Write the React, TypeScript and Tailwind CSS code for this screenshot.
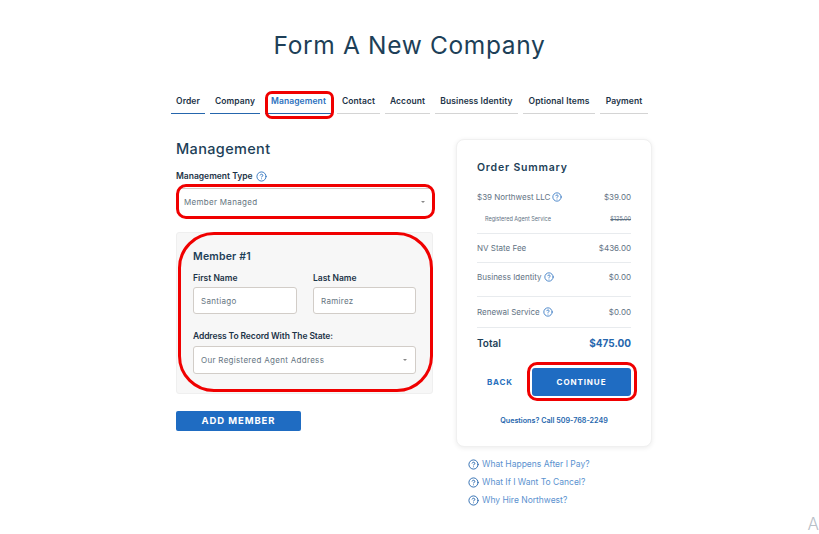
import { CircleHelp } from 'lucide-react'

const TABS = [
  { label: 'Order', width: 'w-[34px]', done: true },
  { label: 'Company', width: 'w-[50px]', done: true },
  { label: 'Management', width: 'w-[67px]', done: true, active: true },
  { label: 'Contact', width: 'w-[43px]' },
  { label: 'Account', width: 'w-[45px]' },
  { label: 'Business Identity', width: 'w-[83px]' },
  { label: 'Optional Items', width: 'w-[72px]' },
  { label: 'Payment', width: 'w-[48px]' },
]

const FONT = "font-['Inter',sans-serif]"

function Help({ className }: { className: string }) {
  return <CircleHelp className={`shrink-0 text-[#2f74c0] ${className}`} strokeWidth={2} />
}

function Arrow() {
  return <span className="h-0 w-0 border-x-[2px] border-t-[2px] border-x-transparent border-t-[#888]" />
}

function Highlight({ className }: { className: string }) {
  return <div className={`pointer-events-none absolute border-[3px] border-[#f00000] ${className}`} />
}

function Field({ label, value, width }: { label: string; value: string; width: string }) {
  return (
    <div className={width}>
      <div className="mb-[3px] h-[12px] text-[8.5px] leading-[12px] font-semibold text-[#1c3347]">{label}</div>
      <div className="flex h-[27px] items-center rounded-[3px] border border-[#d2cdc8] bg-white pl-[7px] text-[8px] tracking-[0.3px] text-[#66757f]">
        {value}
      </div>
    </div>
  )
}

function Row({ label, price, help, className }: { label: string; price: string; help?: boolean; className: string }) {
  return (
    <div className={`flex items-start justify-between border-b border-[#e8ebee] text-[8px] leading-[12px] text-[#5f7283] ${className}`}>
      <span className="flex h-[12px] items-center gap-[3px]">
        {label}
        {help && <Help className="size-[10px]" />}
      </span>
      <span>{price}</span>
    </div>
  )
}

export default function App() {
  return (
    <div className={`relative h-[534px] w-[819px] overflow-hidden bg-white ${FONT}`}>
      <h1 className="pt-[30px] text-center text-[24.5px] leading-[30px] font-normal tracking-[0.65px] text-[#1d3f58]">
        Form A New Company
      </h1>

      {/* Steps */}
      <div className="mt-[34px] ml-[171px] flex gap-[5px]">
        {TABS.map((tab) => (
          <div
            key={tab.label}
            className={`relative h-[20px] ${tab.width} border-b text-center text-[8.5px] leading-[14px] font-semibold tracking-[0.1px] whitespace-nowrap ${
              tab.done ? 'border-[#2566ad]' : 'border-[#d4d4d4]'
            } ${tab.active ? 'text-[#2a70bd]' : 'text-[#1c3347]'}`}
          >
            {tab.label}
            {tab.active && <Highlight className="-top-[3px] -right-[2px] -bottom-[6px] left-0 rounded-[7px]" />}
          </div>
        ))}
      </div>

      <div className="mt-[25px] ml-[176px] flex items-start gap-[23px]">
        {/* Form column */}
        <div className="w-[257px]">
          <h2 className="mt-[1px] text-[14.5px] leading-[18px] font-medium tracking-[0.35px] text-[#1d3f58]">Management</h2>
          <div className="mt-[12px] flex h-[12px] items-center gap-[3px] text-[8.5px] font-semibold text-[#1c3347]">
            Management Type
            <Help className="size-[11px]" />
          </div>
          <div className="relative mt-[6px] ml-[1px] flex h-[27px] items-center justify-between rounded-[3px] border-t border-[#d2cdc8] bg-white pr-[8px] pl-[7px] text-[8px] tracking-[0.3px] text-[#66757f]">
            Member Managed
            <Arrow />
            <Highlight className="-top-[5px] -right-[2px] -bottom-[4px] -left-[1px] rounded-[10px]" />
          </div>

          <div className="relative mt-[17px] h-[162px] rounded-[3px] border border-[#efefef] bg-[#f7f7f7] px-[16px] pt-[16px]">
            <h3 className="text-[10.5px] leading-[16px] font-semibold tracking-[0.2px] text-[#1d3f58]">Member #1</h3>
            <div className="mt-[7px] flex justify-between">
              <Field label="First Name" value="Santiago" width="w-[104px]" />
              <Field label="Last Name" value="Ramirez" width="w-[103px]" />
            </div>
            <div className="mt-[16px] h-[12px] text-[8.5px] leading-[12px] font-semibold tracking-[-0.1px] text-[#1c3347]">
              Address To Record With The State:
            </div>
            <div className="mt-[4px] flex h-[28px] items-center justify-between rounded-[3px] border border-[#d2cdc8] bg-white pr-[8px] pl-[7px] text-[8px] tracking-[0.3px] text-[#66757f]">
              Our Registered Agent Address
              <Arrow />
            </div>
            <Highlight className="-top-[1px] right-[-1px] bottom-[1px] left-[1px] rounded-[36px]" />
          </div>

          <button className="mt-[17px] h-[20px] w-[125px] rounded-[2px] bg-[#1f6cc2] text-[9.5px] font-bold tracking-[0.9px] text-white">
            ADD MEMBER
          </button>
        </div>

        {/* Summary column */}
        <div className="w-[196px]">
          <div className="h-[308px] rounded-[8px] border border-[#f0f0f0] bg-white px-[20px] pt-[20px] shadow-[0_1px_5px_rgba(0,0,0,0.08)]">
            <h3 className="text-[10.5px] leading-[16px] font-semibold tracking-[0.8px] text-[#1d3f58]">Order Summary</h3>
            <div className="mt-[15px] h-[43px] border-b border-[#e8ebee]">
              <div className="flex justify-between text-[8px] leading-[12px] text-[#5f7283]">
                <span className="flex items-center gap-[2px]">
                  $39 Northwest LLC
                  <Help className="size-[10px]" />
                </span>
                <span>$39.00</span>
              </div>
              <div className="mt-[12px] flex justify-between pl-[8px] text-[5.5px] leading-[8px] text-[#5f7283]">
                <span>Registered Agent Service</span>
                <span className="line-through">$125.00</span>
              </div>
            </div>
            <Row label="NV State Fee" price="$436.00" className="h-[29px] pt-[8px]" />
            <Row label="Business Identity" price="$0.00" help className="h-[34px] pt-[8px]" />
            <Row label="Renewal Service" price="$0.00" help className="h-[31px] pt-[9px]" />
            <div className="flex h-[30px] items-center justify-between">
              <span className="text-[10px] font-semibold text-[#1d3f58]">Total</span>
              <span className="text-[10px] font-bold text-[#2566ad]">$475.00</span>
            </div>
            <div className="mt-[10px] flex h-[28px] items-center justify-between">
              <button className="pl-[10px] text-[8px] font-bold tracking-[0.8px] text-[#2a70bd]">BACK</button>
              <button className="relative h-[28px] w-[99px] rounded-[3px] bg-[#1f6cc2] text-[8px] font-bold tracking-[0.9px] text-white">
                CONTINUE
                <Highlight className="-top-[6px] -right-[6px] -bottom-[5px] -left-[5px] rounded-[10px]" />
              </button>
            </div>
            <div className="mt-[19px] text-center text-[7.2px] leading-[12px] font-semibold text-[#2566ad]">
              Questions? Call 509-768-2249
            </div>
          </div>
          <div className="mt-[11px] ml-[12px] flex flex-col gap-[6px] text-[8.5px] leading-[12px] text-[#5b92cf]">
            {['What Happens After I Pay?', 'What If I Want To Cancel?', 'Why Hire Northwest?'].map((q) => (
              <div key={q} className="flex items-center gap-[3px]">
                <CircleHelp className="size-[11px] text-[#2566ad]" strokeWidth={2} />
                {q}
              </div>
            ))}
          </div>
        </div>
      </div>

      <span className="absolute right-[0px] bottom-[0px] text-[17px] leading-[20px] font-light text-[#b8c0c8]">A</span>
    </div>
  )
}
